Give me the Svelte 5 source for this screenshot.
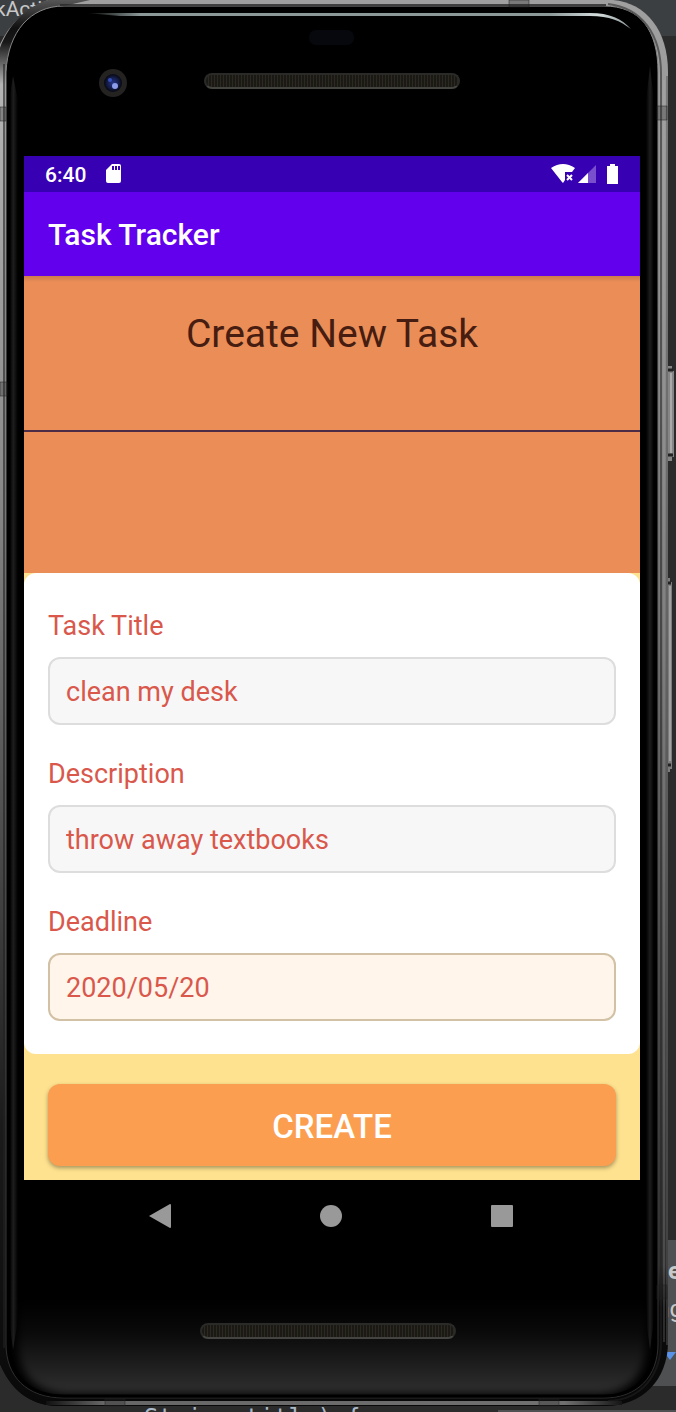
<script>
  let title = $state('clean my desk');
  let description = $state('throw away textbooks');
  let deadline = $state('2020/05/20');
</script>

<main class="stage">
  <div class="desk" aria-hidden="true">
    <span class="tab-name">kActi</span>
    <div class="popup">
      <span class="popup-title">e</span>
      <span class="popup-text">ng</span>
      <svg class="popup-mark" width="12" height="8" viewBox="0 0 12 8"><path d="M0 0h12L6 8z" fill="#5a92e8" /></svg>
    </div>
    <span class="code">String title) &#123;</span>
    <span class="code-bar"></span>
  </div>

  <svg class="body" viewBox="0 0 676 1412" preserveAspectRatio="none" aria-hidden="true">
    <defs>
      <linearGradient id="metal" x1="0" y1="0" x2="0" y2="1">
        <stop offset="0" stop-color="#a0a0a0" />
        <stop offset=".2" stop-color="#929292" />
        <stop offset=".45" stop-color="#727272" />
        <stop offset=".72" stop-color="#484848" />
        <stop offset=".9" stop-color="#303030" />
        <stop offset=".93" stop-color="#0b0b0b" />
        <stop offset="1" stop-color="#080808" />
      </linearGradient>
      <linearGradient id="metalLeft" x1="0" y1="0" x2="0" y2="1">
        <stop offset="0" stop-color="#555555" />
        <stop offset=".02" stop-color="#101010" />
        <stop offset=".03" stop-color="#181818" />
        <stop offset=".06" stop-color="#b4b4b4" />
        <stop offset=".35" stop-color="#888888" />
        <stop offset=".6" stop-color="#4a4a4a" />
        <stop offset=".8" stop-color="#1b1b1b" />
        <stop offset="1" stop-color="#090909" />
      </linearGradient>
      <linearGradient id="edge" x1="0" y1="0" x2="0" y2="1">
        <stop offset="0" stop-color="#888888" />
        <stop offset=".6" stop-color="#555555" />
        <stop offset="1" stop-color="#2c2c2c" />
      </linearGradient>
      <linearGradient id="chin" x1="0" y1="0" x2="0" y2="1">
        <stop offset="0" stop-color="#000000" />
        <stop offset=".35" stop-color="#0a0a0a" />
        <stop offset="1" stop-color="#303030" />
      </linearGradient>
      <linearGradient id="side" x1="0" y1="0" x2="1" y2="0">
        <stop offset="0" stop-color="#000000" />
        <stop offset=".5" stop-color="#1d1d1d" />
        <stop offset="1" stop-color="#000000" />
      </linearGradient>
      <linearGradient id="shine" x1="0" y1="0" x2="1" y2="0">
        <stop offset="0" stop-color="#8c9798" stop-opacity="0" />
        <stop offset=".1" stop-color="#8c9798" />
        <stop offset=".85" stop-color="#8c9798" />
        <stop offset=".94" stop-color="#d5dddd" />
        <stop offset="1" stop-color="#8c9798" />
      </linearGradient>
      <linearGradient id="rim" x1="0" y1="0" x2="1" y2="0">
        <stop offset="0" stop-color="#111111" />
        <stop offset=".1" stop-color="#666666" />
        <stop offset=".9" stop-color="#707070" />
        <stop offset="1" stop-color="#151515" />
      </linearGradient>
      <radialGradient id="lens">
        <stop offset="0" stop-color="#26358a" />
        <stop offset=".6" stop-color="#141d4a" />
        <stop offset="1" stop-color="#07080f" />
      </radialGradient>
      <filter id="soft" x="-5%" y="-5%" width="110%" height="110%" color-interpolation-filters="sRGB"><feGaussianBlur stdDeviation="4" /></filter>
      <clipPath id="glass">
        <path d="M64 6H604C640 6 658 30 658 72V1344C658 1376 638 1398 604 1398H64C26 1398 6 1376 6 1344V72C8 32 30 6 64 6Z" />
      </clipPath>
    </defs>

    <path d="M668 366h4v5h2v86h-2v4h-4z" fill="#858585" />
    <path d="M668 370h5M668 455h5" stroke="#222222" stroke-width="3" />
    <path d="M671 373v80" stroke="#a9a9a9" stroke-width="2" />
    <path d="M666 578h4v4h2v187h-2v3h-4z" fill="#7c7c7c" />
    <path d="M667 583h4M667 765h4" stroke="#222222" stroke-width="3" />
    <path d="M670 586v175" stroke="#a0a0a0" stroke-width="2" />

    <path d="M48 0H613C646 3 668 30 668 72V1342C668 1380 642 1406 606 1406H55C24 1404 4 1384 -8 1342V72C-4 40 16 12 48 0Z" fill="url(#metal)" />
    <path d="M-4 60C4 30 22 8 48 0H90L64 6C30 12 10 34 6 72V1340C8 1375 28 1394 56 1400V1406C24 1404 4 1384 -4 1350Z" fill="url(#metalLeft)" />
    <rect x="46" y="1401" width="576" height="4" fill="url(#rim)" />
    <path d="M64 6H604C640 6 658 30 658 72V1344C658 1376 638 1398 604 1398H64C26 1398 6 1376 6 1344V72C8 32 30 6 64 6Z" fill="#000000" stroke="url(#edge)" />
    <g clip-path="url(#glass)">
      <path d="M20 1300H646V1344C646 1374 630 1392 600 1394H66C34 1392 18 1374 18 1344Z" fill="url(#chin)" filter="url(#soft)" />
      <path d="M9 100L13 76L18 100V1320L13 1350L9 1320Z" fill="url(#side)" />
      <path d="M646 100L650 66L654 100V1320L650 1350L646 1320Z" fill="url(#side)" />
      <path d="M66 9H602C636 9 655 34 655 72V1344C655 1374 636 1396 604 1396H64C28 1396 9 1374 9 1344V72C10 34 32 9 66 9Z" fill="none" stroke="#000000" stroke-width="3" />
    </g>
    <path d="M608 4C642 8 661 34 661 74V1342C661 1374 642 1400 608 1401" fill="none" stroke="#222222" stroke-opacity=".55" stroke-width="2" />
    <path d="M664 80V1342" stroke="#b5b5b5" opacity=".2" stroke-width="2" />
    <path d="M667 76V1345" stroke="#555555" />
    <path d="M4 64V1348" stroke="#222222" opacity=".6" stroke-width="2" />
    <path d="M60 5H606" stroke="#292929" opacity=".8" stroke-width="2" />
    <path d="M86 13H590C610 13 622 19 631 29C620 21 610 16 590 16H120Z" fill="url(#shine)" />
    <path d="M509 0h20v7h-20zM657 106h10v14h-10zM0 107h6v14H0zM0 382h7v14H0zM657 1285h10v14h-10zM105 1399h20v7h-20zM539 1399h20v7h-20z" fill="#222222" fill-opacity=".3" stroke="#222222" stroke-opacity=".5" />

    <rect x="309" y="30" width="45" height="15" rx="7" fill="#06080d" />
    <circle cx="113" cy="83" r="14" fill="#242322" />
    <circle cx="113" cy="83" r="9" fill="url(#lens)" />
    <circle cx="110" cy="80" r="2" fill="#3450b8" />
    <circle cx="115" cy="86" r="3" fill="#8c9cea" />
  </svg>

  <div class="device">
    <div class="forehead"><span class="speaker"></span></div>

    <div class="screen">
      <div class="status">
        <span class="clock">6:40</span>
        <svg width="16" height="20" viewBox="0 0 16 20" aria-hidden="true">
          <path d="M6 0h7q2 0 2 2v15q0 2-2 2H2q-2 0-2-2V6z" fill="#ffffff" />
          <path d="M6 2h2v4H6zM9 2h2v4H9zM12 2h2v4h-2z" fill="#3700b3" />
        </svg>
        <svg class="signals" width="68" height="20" viewBox="0 0 68 20" aria-hidden="true">
          <path d="M0 4Q12-4 24 4L21 8H14V16L12 19L11 18Z" fill="#ffffff" />
          <path d="M16 11l5 5M21 11l-5 5" stroke="#ffffff" stroke-width="2" />
          <path d="M45 1v18H27z" fill="#7a4fce" />
          <path d="M37 9v10H27z" fill="#ffffff" />
          <path d="M59 0h5v2h3v18H56V2h3z" fill="#ffffff" />
        </svg>
      </div>

      <header class="app-bar">Task Tracker</header>

      <section class="hero">
        <h1>Create New Task</h1>
      </section>

      <form onsubmit={(event) => event.preventDefault()}>
        <div class="card">
          <div class="field">
            <label for="title">Task Title</label>
            <input id="title" type="text" bind:value={title} />
          </div>
          <div class="field">
            <label for="description">Description</label>
            <input id="description" type="text" bind:value={description} />
          </div>
          <div class="field">
            <label for="deadline">Deadline</label>
            <input id="deadline" class="date" type="text" bind:value={deadline} />
          </div>
        </div>
        <div class="actions">
          <button class="create" type="submit">CREATE</button>
        </div>
      </form>
    </div>

    <nav class="keys">
      <button type="button" aria-label="Back">
        <svg width="24" height="26" viewBox="0 0 24 26"><path d="M1 13L22 1q1 0 1 1v22q0 1-1 1z" fill="#999999" /></svg>
      </button>
      <button type="button" aria-label="Home">
        <svg width="24" height="26" viewBox="0 0 24 26"><circle cx="12" cy="13" r="11" fill="#999999" /></svg>
      </button>
      <button type="button" aria-label="Overview">
        <svg width="24" height="26" viewBox="0 0 24 26"><rect x="1" y="2" width="22" height="22" rx="1" fill="#999999" /></svg>
      </button>
    </nav>

    <div class="foot"><span class="speaker"></span></div>
  </div>
</main>

<style>
  :global(body) {
    margin: 0;
    background: #2b2b2b;
  }

  .stage {
    position: relative;
    overflow: hidden;
    font-family: Roboto, 'Liberation Sans', sans-serif;
  }

  .desk,
  .body {
    position: absolute;
    inset: 0;
    width: 100%;
    height: 100%;
  }

  .desk {
    background: linear-gradient(#3c3f41 36px, #2b2b2b 36px);
    color: #c8c8c8;
  }

  .desk > *,
  .popup > * {
    position: absolute;
  }

  .tab-name {
    left: -5px;
    top: -3px;
    font-size: 21px;
    line-height: 24px;
  }

  .popup {
    right: 0;
    bottom: 26px;
    width: 60px;
    height: 146px;
    background: #4e5052;
    font-size: 24px;
    line-height: 28px;
  }

  .popup-title {
    left: 52px;
    top: 17px;
    font-weight: 700;
  }

  .popup-text {
    right: -7px;
    top: 55px;
  }

  .popup-mark {
    right: 0;
    bottom: 26px;
  }

  .code {
    left: 144px;
    top: 1404px;
    color: #a9b7c6;
    font: 24px/28px 'DejaVu Sans Mono', monospace;
    white-space: pre;
  }

  .code-bar {
    left: 498px;
    right: 0;
    bottom: 0;
    height: 2px;
    background: #4e5052;
  }

  .device {
    position: relative;
    padding: 0 36px 0 24px;
  }

  .forehead,
  .foot {
    display: flex;
    justify-content: center;
    box-sizing: border-box;
  }

  .forehead {
    height: 156px;
    padding-top: 73px;
  }

  .foot {
    height: 160px;
    padding: 71px 8px 0 0;
  }

  .speaker {
    box-sizing: border-box;
    width: 256px;
    height: 16px;
    border: 2px solid #2a2a28;
    border-bottom-color: #444440;
    border-radius: 8px;
    background: repeating-linear-gradient(90deg, #1b1914 0 2px, #2c2922 2px 3px);
  }

  .status {
    display: flex;
    align-items: center;
    box-sizing: border-box;
    height: 36px;
    padding: 0 21px;
    background: #3700b3;
    color: #ffffff;
  }

  .clock {
    margin-right: 20px;
    padding-top: 2px;
    font-size: 21px;
    font-weight: 500;
    line-height: 24px;
  }

  .signals {
    margin-left: auto;
  }

  .app-bar {
    padding: 25px 24px 23px;
    background: #6200ee;
    color: #ffffff;
    font-size: 30px;
    font-weight: 500;
    line-height: 36px;
  }

  .hero {
    height: 297px;
    background: linear-gradient(rgb(0 0 0 / 12%), transparent 6px), #ea8d57;
  }

  h1 {
    box-sizing: border-box;
    height: 156px;
    margin: 0;
    padding-top: 35px;
    border-bottom: 2px solid #4b2b45;
    color: #461d10;
    font-size: 39px;
    font-weight: 400;
    line-height: 46px;
    text-align: center;
  }

  form {
    background: #fee28f;
  }

  .card {
    display: flex;
    flex-direction: column;
    gap: 33px;
    padding: 37px 24px 33px;
    border-radius: 12px;
    background: #ffffff;
  }

  .field {
    display: flex;
    flex-direction: column;
    gap: 15px;
  }

  label,
  input {
    color: #d9584b;
    font-size: 27px;
    line-height: 32px;
  }

  input {
    box-sizing: border-box;
    width: 100%;
    height: 68px;
    padding: 2px 16px 0;
    border: 2px solid #dddddd;
    border-radius: 12px;
    background: #f7f7f7;
    font-family: inherit;
  }

  .date {
    border-color: #d2c1a4;
    background: #fff5eb;
  }

  .actions {
    padding: 30px 24px 14px;
  }

  .create {
    display: block;
    width: 100%;
    height: 82px;
    padding: 4px 0 0;
    border: 0;
    border-radius: 12px;
    background: #fc9e50;
    box-shadow: 0 2px 4px rgb(0 0 0 / 35%);
    color: #ffffff;
    font: 500 33px/40px Roboto, sans-serif;
  }

  .keys {
    display: flex;
    justify-content: space-around;
    align-items: center;
    height: 72px;
    padding: 0 52px 0 50px;
  }

  .keys button {
    display: flex;
    padding: 0;
    border: 0;
    background: none;
  }
</style>
